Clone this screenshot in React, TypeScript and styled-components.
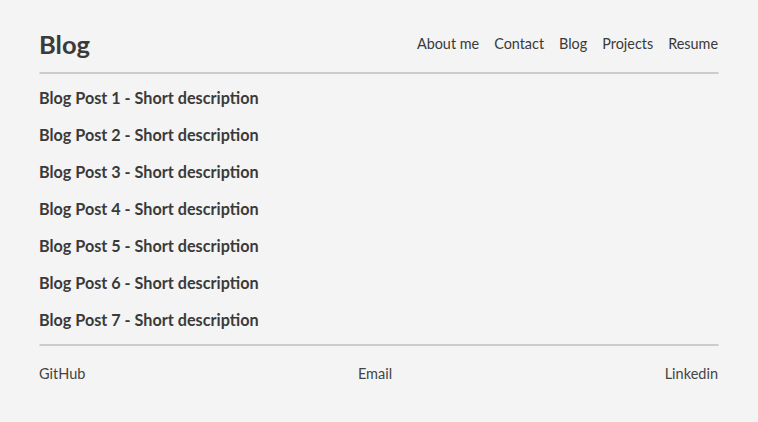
import React from 'react'
import styled, { createGlobalStyle } from 'styled-components'

const GlobalStyle = createGlobalStyle`
    body {
        margin: 0;
        background: #f4f4f4;
        font-family: Lato, "Open Sans", sans-serif;
        color: #3a3a3a;
    }
`;

const Page = styled.div`
    width: 679px;
    margin: 0 auto;
    padding-top: 28px;
    transform: translateX(-0.5px);
`;

const Header = styled.header`
    display: flex;
    align-items: center;
    justify-content: space-between;
    height: 32px;
    padding-bottom: 12px;
    border-bottom: 2px solid #cccccc;
`;

const Title = styled.h1`
    margin: 0;
    font-size: 25.5px;
    font-weight: 700;
`;

const Nav = styled.nav`
    display: flex;
    gap: 15px;
    margin-top: -2px;
`;

const NavLink = styled.a`
    font-size: 14.4px;
    color: #3a3a3a;
    text-decoration: none;
`;

const PostList = styled.ul`
    list-style: none;
    margin: 0;
    padding: 13px 0 13px;
    display: flex;
    flex-direction: column;
    gap: 15px;
    border-bottom: 2px solid #cccccc;
`;

const Post = styled.li`
    font-size: 16.2px;
    font-weight: 700;
    line-height: 22px;
`;

const Footer = styled.footer`
    display: flex;
    justify-content: space-between;
    padding-top: 19px;
    font-size: 14.5px;
    color: #444444;
`;

const posts = [1, 2, 3, 4, 5, 6, 7]

export default function App() {
    return (
        <Page>
            <GlobalStyle />
            <Header>
                <Title>Blog</Title>
                <Nav>
                    <NavLink href="#">About me</NavLink>
                    <NavLink href="#">Contact</NavLink>
                    <NavLink href="#">Blog</NavLink>
                    <NavLink href="#">Projects</NavLink>
                    <NavLink href="#">Resume</NavLink>
                </Nav>
            </Header>
            <PostList>
                {posts.map(n => (
                    <Post key={n}>Blog Post {n} - Short description</Post>
                ))}
            </PostList>
            <Footer>
                <span>GitHub</span>
                <span>Email</span>
                <span>Linkedin</span>
            </Footer>
        </Page>
    )
}
